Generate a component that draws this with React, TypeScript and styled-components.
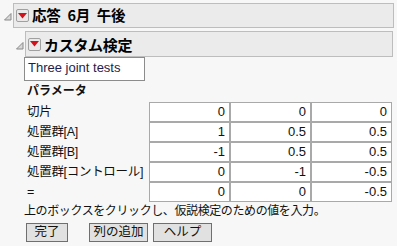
import { Fragment } from "react";
import styled, { createGlobalStyle } from "styled-components";

const GlobalStyle = createGlobalStyle`
  body {
    margin: 0;
    background: #f7f7f7;
    font-family: "Liberation Sans", "Noto Sans CJK JP", sans-serif;
    color: #111;
  }
`;

const Page = styled.div`
  width: 397px;
  height: 246px;
  box-sizing: border-box;
  padding: 3px 3px 0 3px;
  overflow: hidden;
`;

const OutlineRow = styled.div<{ $indent?: number; $right?: number; $top?: number }>`
  display: flex;
  align-items: center;
  margin-top: ${(p) => p.$top || 0}px;
  margin-left: ${(p) => p.$indent || 0}px;
  margin-right: ${(p) => p.$right || 0}px;
`;

const Disclosure = styled.svg`
  width: 10px;
  height: 10px;
  flex: none;
  margin-top: 3px;
`;

const HeaderBox = styled.div<{ $height: number }>`
  flex: 1;
  height: ${(p) => p.$height}px;
  box-sizing: border-box;
  border: 1px solid #bdbdbd;
  background: #ebebeb;
  display: flex;
  align-items: center;
  gap: 3px;
  padding-left: 2px;
`;

const MenuIcon = styled.span`
  width: 13px;
  height: 13px;
  box-sizing: border-box;
  border: 1px solid #a0a0a0;
  border-radius: 2px;
  background: #e9e9e9;
  display: flex;
  align-items: center;
  justify-content: center;
  flex: none;
`;

const Title = styled.span<{ $size: number; $words?: number }>`
  font-weight: bold;
  font-size: ${(p) => p.$size}px;
  font-family: "Noto Sans CJK JP", sans-serif;
  line-height: 1;
  color: #000;
  letter-spacing: -0.3px;
  word-spacing: ${(p) => p.$words || 0}px;
`;

const Content = styled.div`
  margin-left: 21px;
  display: flex;
  flex-direction: column;
  align-items: flex-start;
`;

const TextBox = styled.div`
  width: 121px;
  height: 24px;
  box-sizing: border-box;
  border: 1px solid #8c8c8c;
  background: #fff;
  padding: 3px 0 0 3px;
  font-size: 13px;
  line-height: 14px;
  color: #1d1d4d;
`;

const Heading = styled.div`
  font-weight: bold;
  font-size: 12px;
  line-height: 14px;
  margin: 2px 0 0 3px;
  font-family: "Noto Sans CJK JP", sans-serif;
`;

const Grid = styled.div`
  display: grid;
  grid-template-columns: 125px 81px 81px 81px;
  grid-auto-rows: 20px;
  margin-top: 5px;
`;

const Label = styled.div`
  font-size: 12.5px;
  line-height: 20px;
  padding-left: 3px;
  white-space: nowrap;
  letter-spacing: -0.3px;
`;

const Cell = styled.div`
  border: 1px solid #a9a9a9;
  background: #fff;
  font-size: 13px;
  line-height: 18px;
  text-align: right;
  padding-right: 4px;
  color: #111;
`;

const Hint = styled.div`
  font-size: 12px;
  line-height: 14px;
  margin-top: 2px;
  letter-spacing: -0.4px;
`;

const ButtonRow = styled.div`
  display: flex;
  margin: 5px 0 0 2px;
`;

const Button = styled.div<{ $width: number; $after: number }>`
  width: ${(p) => p.$width}px;
  height: 19px;
  box-sizing: border-box;
  border: 1px solid #6f6f6f;
  background: #e1e1e1;
  margin-right: ${(p) => p.$after}px;
  font-size: 12.5px;
  line-height: 17px;
  text-align: center;
`;

function Triangle() {
  return (
    <Disclosure viewBox="0 0 10 10">
      <polygon points="8,1.5 8,8 1.5,8" fill="#d8d8d8" stroke="#8a8a8a" strokeWidth="1" />
    </Disclosure>
  );
}

function RedMenu() {
  return (
    <MenuIcon>
      <svg width="9" height="6" viewBox="0 0 9 6">
        <polygon points="0,0 9,0 4.5,5.5" fill="#d4101a" />
      </svg>
    </MenuIcon>
  );
}

const rows: [string, string[]][] = [
  ["切片", ["0", "0", "0"]],
  ["処置群[A]", ["1", "0.5", "0.5"]],
  ["処置群[B]", ["-1", "0.5", "0.5"]],
  ["処置群[コントロール]", ["0", "-1", "-0.5"]],
  ["=", ["0", "0", "-0.5"]],
];

const buttons = [
  { label: "完了", width: 42, after: 21 },
  { label: "列の追加", width: 59, after: 5 },
  { label: "ヘルプ", width: 59, after: 0 },
];

export default function App() {
  return (
    <>
      <GlobalStyle />
      <Page>
        <OutlineRow>
          <Triangle />
          <HeaderBox $height={25}>
            <RedMenu />
            <Title $size={14.5} $words={4}>
              応答 6月 午後
            </Title>
          </HeaderBox>
        </OutlineRow>
        <OutlineRow $indent={12} $right={1} $top={3}>
          <Triangle />
          <HeaderBox $height={26}>
            <RedMenu />
            <Title $size={15}>カスタム検定</Title>
          </HeaderBox>
        </OutlineRow>
        <Content>
          <TextBox>Three joint tests</TextBox>
          <Heading>パラメータ</Heading>
          <Grid>
            {rows.map(([name, vals]) => (
              <Fragment key={name}>
                <Label>{name}</Label>
                {vals.map((v, i) => (
                  <Cell key={i}>{v}</Cell>
                ))}
              </Fragment>
            ))}
          </Grid>
          <Hint>上のボックスをクリックし、仮説検定のための値を入力。</Hint>
          <ButtonRow>
            {buttons.map((b) => (
              <Button key={b.label} $width={b.width} $after={b.after}>
                {b.label}
              </Button>
            ))}
          </ButtonRow>
        </Content>
      </Page>
    </>
  );
}
